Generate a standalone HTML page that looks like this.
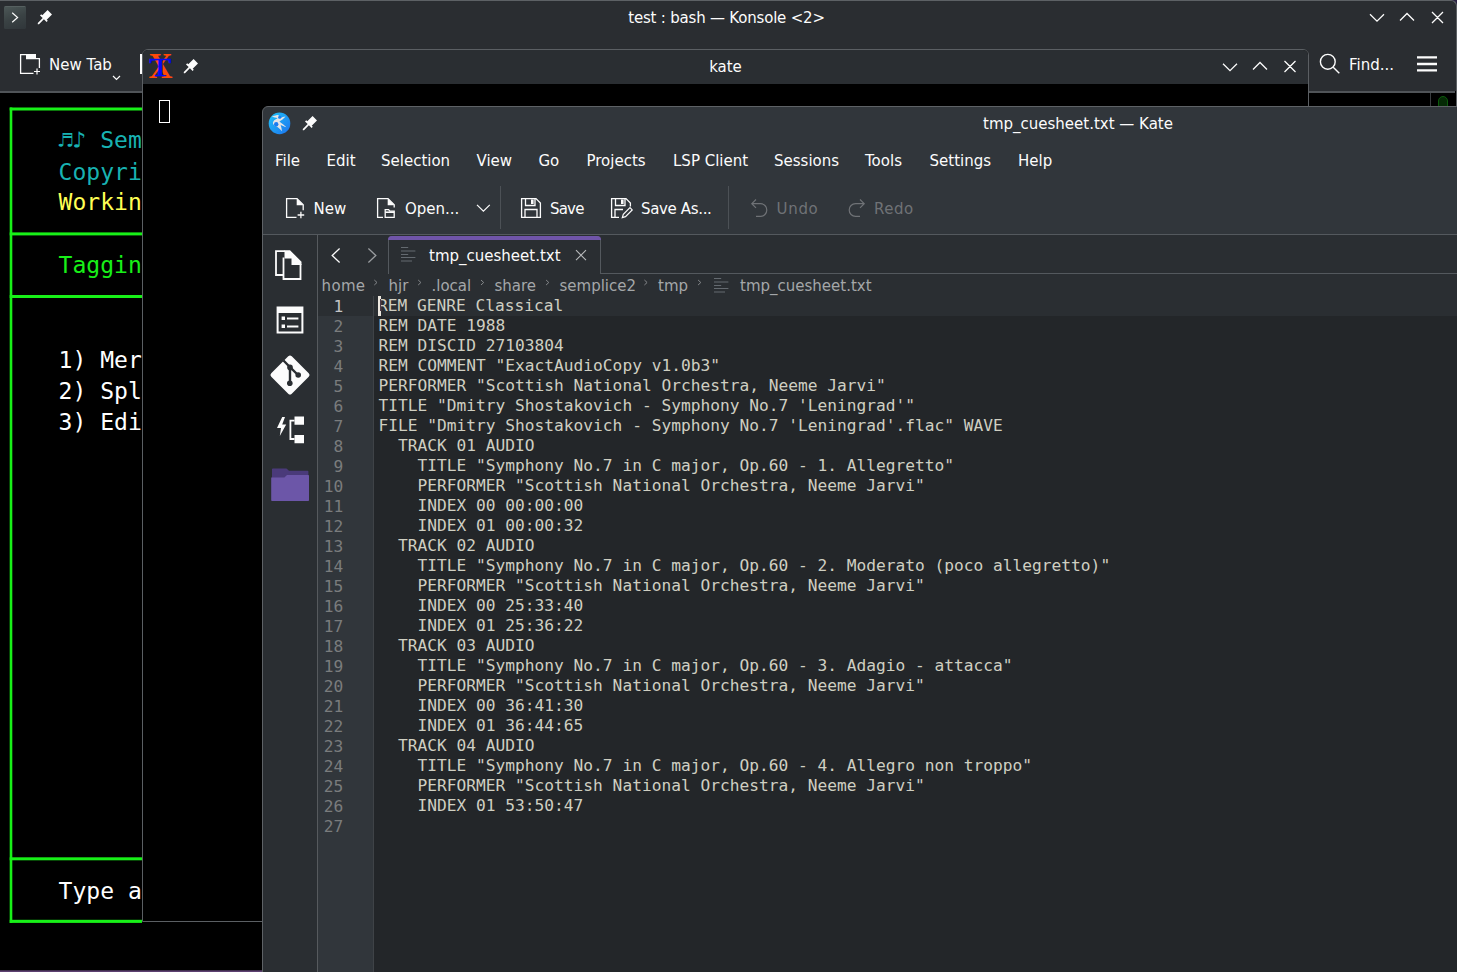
<!DOCTYPE html>
<html><head><meta charset="utf-8"><title>tmp_cuesheet.txt — Kate</title>
<style>
html,body{margin:0;padding:0;background:#000;}
body{width:1457px;height:972px;position:relative;overflow:hidden;font-family:"DejaVu Sans","Liberation Sans",sans-serif;font-size:15px;color:#fcfcfc;}
.a{position:absolute;}
.layer{position:absolute;left:0;top:0;width:0;height:0;}
.t{position:absolute;white-space:pre;line-height:20px;height:20px;margin-top:1px;}
svg{position:absolute;overflow:visible;}
.w{stroke:#fcfcfc;fill:none;}
/* Konsole */
.kbg{left:0;top:0;width:1457px;height:972px;background:#000;}
.khead{left:0;top:0;width:1457px;height:91px;background:#2a2d31;border-top:1px solid #5d6165;border-right:1px solid #5d6165;border-top-right-radius:6px;box-sizing:border-box;}
.ksep{left:0;top:91px;width:1455px;height:2px;background:#505458;}
.kstrip{left:0;top:970px;width:262px;height:2px;background:linear-gradient(180deg,#33243d,#6b4a82);}
.m1{font-family:"DejaVu Sans Mono","Liberation Mono",monospace;font-size:23.04px;line-height:31px;height:31px;white-space:pre;position:absolute;left:58.6px;}
.m1 .n{display:inline-block;width:13.87px;text-align:center;}
.g{background:#18f018;position:absolute;}
.cy{color:#18b2b2}.ye{color:#ffff54}.gr{color:#18f018}.wh{color:#fff}
/* xterm */
.xwin{left:142px;top:49px;width:1167px;height:873px;background:#000;border:1px solid #5b5f63;border-radius:6px 6px 0 0;box-sizing:border-box;}
.xtitle{left:143px;top:50px;width:1165px;height:34px;background:#2a2e32;border-radius:5px 5px 0 0;}
/* Kate */
.kwin{left:262px;top:106px;width:1300px;height:900px;background:#31363b;border:1px solid #5e6266;border-radius:6px 0 0 0;box-sizing:border-box;}
.dis{color:#6f7276;}
.bc{color:#a4a7a9;}
.vsep{width:1px;background:#4c5156;}
#ed{position:absolute;left:318px;top:296px;width:1200px;height:700px;background:#232629;}
#ed .gut{position:absolute;left:0;top:0;width:55px;height:700px;background:#31363b;}
#ed .gsep{position:absolute;left:55px;top:0;width:1px;height:700px;background:#3f4347;}
#ed .cl{position:absolute;left:56px;top:0;width:1200px;height:20px;background:#2a2e32;}
#ed .clg{position:absolute;left:0;top:0;width:55px;height:20px;background:#2a2e32;}
#ed .cur{position:absolute;left:60px;top:0;width:3px;height:20px;background:#ece8e0;z-index:3;}
#ed .cur i{position:absolute;left:1.6px;top:3px;width:1.4px;height:12px;background:#4a3a4a;}
#ed .nums{position:absolute;left:0;top:1px;width:25.3px;text-align:right;font-family:"DejaVu Sans Mono","Liberation Mono",monospace;font-size:16.22px;line-height:20px;color:#7a7c7d;}
#ed .nums div{height:20px;}
#ed .nums .c{color:#c3c4c5;}
#ed .code{position:absolute;left:60.5px;top:0;font-family:"DejaVu Sans Mono","Liberation Mono",monospace;font-size:16.22px;line-height:20px;color:#cfcfc2;white-space:pre;}
#ed .code div{height:20px;}
#ed .code div:first-child{margin-left:-0.5px;}

</style></head><body>
<div class="layer" id="konsole">
<div class="a kbg"></div>
<div class="a" style="left:1449px;top:0;width:8px;height:8px;background:#2a2142;"></div>
<div class="a khead"></div>
<div class="a" style="left:1456px;top:91px;width:1px;height:20px;background:#5d6165;"></div>
<div class="a ksep"></div>
<div class="a kstrip"></div>
<!-- title bar -->
<div class="a" style="left:3.5px;top:6px;width:22.5px;height:22.5px;border-radius:1.5px;background:linear-gradient(160deg,#4c5757,#3a4244 50%,#30363a);border-top:1px solid #566060;box-sizing:border-box;"></div>
<svg style="left:4px;top:6px" width="22" height="22" viewBox="0 0 22 22"><path class="w" stroke-width="1.2" d="M8.2 6.8 L13.6 11.5 L8.2 16.2"/></svg>
<svg style="left:37px;top:9px" width="16" height="16" viewBox="0 0 16 16"><path fill="#fcfcfc" d="M10.6 1 L15 5.4 L9.7 10.7 L10.8 11.8 L9.6 13 L6.9 10.3 L2 15.2 L0.8 15.2 L0.8 14 L5.7 9.1 L3 6.4 L4.2 5.2 L5.3 6.3 Z"/></svg>
<div class="t" style="left:0;width:1453px;text-align:center;top:7px;letter-spacing:-0.2px;">test : bash — Konsole &lt;2&gt;</div>
<svg style="left:1369px;top:9px" width="80" height="18" viewBox="0 0 80 18"><path class="w" stroke-width="1.25" d="M1 5.2 L8 12.2 L15 5.2 M31 11.5 L38 4.5 L45 11.5 M63 3 L74 14 M74 3 L63 14"/></svg>
<!-- toolbar -->
<svg style="left:19px;top:53px" width="23" height="23" viewBox="0 0 23 23"><path class="w" stroke-width="1.3" d="M14.5 20.4 H1.6 V1.6 H7.5 M20.4 5.5 V15"/><path fill="#fcfcfc" d="M7 1 H17 V5 H21 V6.2 H7 Z"/><path class="w" stroke-width="1.2" d="M15 18.5 H21 M18 15.5 V21.5"/></svg>
<div class="t" style="left:49px;top:54px;">New Tab</div>
<svg style="left:112px;top:75px" width="9" height="6" viewBox="0 0 9 6"><path class="w" stroke-width="1.2" d="M1 1 L4.5 4.5 L8 1"/></svg>
<div class="a" style="left:140px;top:54px;width:2px;height:20px;background:#fcfcfc;"></div>
<svg style="left:1318px;top:53px" width="24" height="24" viewBox="0 0 24 24"><circle class="w" stroke-width="1.4" cx="9.8" cy="8.8" r="7.4"/><path class="w" stroke-width="1.4" d="M15.2 14.2 L21.3 20.3"/></svg>
<div class="t" style="left:1349px;top:54px;">Find...</div>
<svg style="left:1417px;top:55px" width="20" height="18" viewBox="0 0 20 18"><path fill="#fcfcfc" d="M0 1.2 H20 V3.6 H0 Z M0 7.8 H20 V10.2 H0 Z M0 14.2 H20 V16.6 H0 Z"/></svg>
<!-- scrollbar -->
<div class="a" style="left:1430px;top:93px;width:1px;height:14px;background:#3a3d40;"></div>
<div class="a" style="left:1438px;top:96px;width:10px;height:20px;border:1px solid #0c5a0c;background:#052a05;border-radius:5px;box-sizing:border-box;"></div>
<!-- terminal box -->
<svg style="left:0;top:93px" width="320" height="840" viewBox="0 93 320 840"><g fill="#18f018"><rect x="9.7" y="107.5" width="2.6" height="815.5"/><rect x="9.7" y="107.5" width="132.3" height="3"/><rect x="9.7" y="232.4" width="132.3" height="3"/><rect x="9.7" y="295" width="132.3" height="3"/><rect x="9.7" y="857.3" width="132.3" height="3"/><rect x="9.7" y="919.8" width="132.3" height="3.1"/></g></svg>
<div class="m1 cy" style="top:124.6px;"><span class="n">♬</span><span class="n">♪</span> Semplice</div>
<div class="m1 cy" style="top:156.6px;">Copyright</div>
<div class="m1 ye" style="top:186.6px;">Working</div>
<div class="m1 gr" style="top:249.6px;">Tagging</div>
<div class="m1 wh" style="top:344.6px;">1) Merge</div>
<div class="m1 wh" style="top:375.6px;">2) Split</div>
<div class="m1 wh" style="top:406.6px;">3) Edit</div>
<div class="m1 wh" style="top:875.6px;">Type a</div>
</div>
<div class="layer" id="xterm">
<div class="a xwin"></div>
<div class="a xtitle"></div>
<svg style="left:147px;top:53px" width="28" height="28" viewBox="0 0 28 28"><text x="13.5" y="25" text-anchor="middle" font-family="Liberation Serif, DejaVu Serif, serif" font-weight="bold" font-size="35.3" fill="#ff4808" textLength="24" lengthAdjust="spacingAndGlyphs">X</text><text x="13.2" y="22.7" text-anchor="middle" font-family="Liberation Serif, DejaVu Serif, serif" font-size="25.6" fill="#0808f8" stroke="#0808f8" stroke-width="0.45" textLength="22" lengthAdjust="spacingAndGlyphs">T</text></svg>
<svg style="left:183px;top:58px" width="16" height="16" viewBox="0 0 16 16"><path fill="#fcfcfc" d="M10.6 1 L15 5.4 L9.7 10.7 L10.8 11.8 L9.6 13 L6.9 10.3 L2 15.2 L0.8 15.2 L0.8 14 L5.7 9.1 L3 6.4 L4.2 5.2 L5.3 6.3 Z"/></svg>
<div class="t" style="left:143px;width:1165px;text-align:center;top:56px;">kate</div>
<svg style="left:1221.5px;top:58px" width="80" height="18" viewBox="0 0 80 18"><path class="w" stroke-width="1.25" d="M1 5.7 L8 12.7 L15 5.7 M31 11.5 L38 4.5 L45 11.5 M62.5 3 L73.5 14 M73.5 3 L62.5 14"/></svg>
<div class="a" style="left:159px;top:100px;width:11px;height:23px;border:1px solid #fff;box-sizing:border-box;"></div>
</div>
<div class="layer" id="kate">
<div class="a kwin"></div>
<!-- title -->
<svg style="left:268px;top:112px" width="23" height="23" viewBox="0 0 23 23"><defs><linearGradient id="kg" x1="0" y1="0" x2="1" y2="1"><stop offset="0" stop-color="#20c4f8"/><stop offset="1" stop-color="#1c72ee"/></linearGradient></defs><circle cx="11.5" cy="11.4" r="10.8" fill="url(#kg)"/><path fill="#e4e4e6" d="M3.6 4.8 C6.5 3.6 8.8 3 10.6 3 C10.8 4.4 10.7 5.6 10.4 6.6 C13 5.6 15.4 4.6 17.6 4.4 C15.6 6.6 13.4 8.2 11.4 9.4 C13.8 11.2 16.4 13.2 18.4 15.2 C16 14.6 14.2 13.8 12.6 12.8 C13.2 15 13.8 17 14 19.2 C12.4 17.6 10.8 16 9.2 14.8 C7.8 14.4 6 13.6 5 11.8 C4.6 10.2 5.6 8.6 7.4 7.6 C8.4 7 9.2 6.6 9.6 6.2 C8 5.6 5.6 5.2 3.6 4.8 Z"/><circle cx="8.2" cy="12.2" r="2.2" fill="#1c7cf0"/><circle cx="11.8" cy="5.3" r="1.5" fill="#1c7cf0"/></svg>
<svg style="left:302px;top:115px" width="16" height="16" viewBox="0 0 16 16"><path fill="#fcfcfc" d="M10.6 1 L15 5.4 L9.7 10.7 L10.8 11.8 L9.6 13 L6.9 10.3 L2 15.2 L0.8 15.2 L0.8 14 L5.7 9.1 L3 6.4 L4.2 5.2 L5.3 6.3 Z"/></svg>
<div class="t" style="left:983px;top:113px;">tmp_cuesheet.txt — Kate</div>
<!-- menu -->
<div class="t" style="left:275px;top:150px;">File</div>
<div class="t" style="left:326.5px;top:150px;">Edit</div>
<div class="t" style="left:381px;top:150px;">Selection</div>
<div class="t" style="left:476.5px;top:150px;">View</div>
<div class="t" style="left:538.5px;top:150px;">Go</div>
<div class="t" style="left:586.5px;top:150px;">Projects</div>
<div class="t" style="left:673px;top:150px;">LSP Client</div>
<div class="t" style="left:774px;top:150px;">Sessions</div>
<div class="t" style="left:865px;top:150px;">Tools</div>
<div class="t" style="left:929.5px;top:150px;">Settings</div>
<div class="t" style="left:1018px;top:150px;">Help</div>
<!-- toolbar -->
<svg style="left:285px;top:197px" width="22" height="22" viewBox="0 0 22 22"><path class="w" stroke-width="1.3" d="M11.5 20.4 H1.6 V1.6 H12 L18.2 7.8 V13.2"/><path fill="#fcfcfc" d="M11.7 1.3 L18.6 8.2 H11.7 Z"/><path class="w" stroke-width="1.3" d="M12.6 18 H19.2 M15.9 14.7 V21.3"/></svg>
<div class="t" style="left:313.5px;top:198px;">New</div>
<svg style="left:376px;top:197px" width="22" height="22" viewBox="0 0 22 22"><path class="w" stroke-width="1.3" d="M7 20.4 H1.6 V1.6 H12 L18.2 7.8 V10.5"/><path fill="#fcfcfc" d="M11.7 1.3 L18.6 8.200 H11.7 Z"/><path class="w" stroke-width="1.3" d="M9.2 20.4 V12.7 H12.6 L13.8 14.2 H18.2 V20.4 Z"/><path fill="#fcfcfc" d="M9.2 14.4 H18.2 V16 H9.2 Z"/></svg>
<div class="t" style="left:405px;top:198px;">Open...</div>
<svg style="left:476px;top:203px" width="15" height="10" viewBox="0 0 15 10"><path class="w" stroke-width="1.2" d="M1 1.8 L7.4 8.2 L13.8 1.8"/></svg>
<div class="a vsep" style="left:500px;top:186px;height:43px;"></div>
<svg style="left:520px;top:197px" width="22" height="22" viewBox="0 0 22 22"><path class="w" stroke-width="1.3" d="M1.6 1.6 H16 L20.4 6 V20.4 H1.6 Z M5.5 1.6 V8.5 H15 V1.6 M5 20.4 V12.5 H17 V20.4"/><path fill="#fcfcfc" d="M11 2.5 H13.6 V7 H11 Z"/></svg>
<div class="t" style="left:550px;top:198px;letter-spacing:-0.8px;">Save</div>
<svg style="left:610px;top:197px" width="24" height="22" viewBox="0 0 24 22"><path class="w" stroke-width="1.3" d="M9 20.4 H1.6 V1.6 H16 L20.4 6 V9.5 M5.5 1.6 V8.5 H15 V1.6 M5 20.4 V12.5 H13"/><path fill="#fcfcfc" d="M11 2.5 H13.6 V7 H11 Z"/><path class="w" stroke-width="1.2" d="M12.3 20.6 L13.3 17.4 L20 10.7 L22.2 12.9 L15.5 19.6 Z"/></svg>
<div class="t" style="left:641px;top:198px;letter-spacing:-0.35px;">Save As...</div>
<div class="a vsep" style="left:728px;top:186px;height:43px;"></div>
<svg style="left:750px;top:198px" width="20" height="20" viewBox="0 0 20 20"><path stroke="#6f7276" fill="none" stroke-width="1.2" d="M6 1.5 L1.8 5.7 L6 9.9 M1.8 5.7 H10.5 A6.3 6.3 0 0 1 10.5 18.3 H6"/></svg>
<div class="t dis" style="left:776.5px;top:198px;letter-spacing:0.7px;">Undo</div>
<svg style="left:846px;top:198px" width="20" height="20" viewBox="0 0 20 20"><path stroke="#6f7276" fill="none" stroke-width="1.2" d="M14 1.5 L18.2 5.7 L14 9.9 M18.2 5.7 H9.5 A6.3 6.3 0 0 0 9.5 18.3 H14"/></svg>
<div class="t dis" style="left:874px;top:198px;letter-spacing:0.5px;">Redo</div>
<div class="a" style="left:263px;top:234px;width:1300px;height:1px;background:#54595e;"></div>
<!-- lower area -->
<div class="a" style="left:263px;top:235px;width:1300px;height:800px;background:#2a2e32;"></div>
<div class="a vsep" style="left:317px;top:235px;height:800px;background:#565a5e;"></div>
<!-- sidebar icons -->
<svg style="left:274px;top:249px" width="29" height="32" viewBox="0 0 29 32"><path class="w" stroke-width="1.8" d="M9.5 26 H2 V2.2 H11"/><path class="w" stroke-width="1.8" d="M9.5 8.5 V30 H26.5 V15"/><path fill="#fcfcfc" d="M10.5 1.2 H16 L27.5 12.7 V16 H17.5 V9.5 H10.5 Z"/></svg>
<svg style="left:276px;top:306px" width="28" height="28" viewBox="0 0 28 28"><path class="w" stroke-width="2" d="M1.6 1.6 H26.4 V26.4 H1.6 Z"/><path fill="#fcfcfc" d="M1 1 H27 V7 H1 Z M5.6 10.6 H9 V14 H5.6 Z M11 11.6 H22.4 V13.4 H11 Z M5.6 18.6 H9 V22 H5.6 Z M11 19.6 H22.4 V21.4 H11 Z"/></svg>
<svg style="left:268px;top:353px" width="44" height="44" viewBox="0 0 44 44"><rect x="7.5" y="7.5" width="29" height="29" rx="2.5" transform="rotate(45 22 22)" fill="#fcfcfc"/><path stroke="#2a2e32" stroke-width="2.4" fill="none" d="M15.5 7.5 L22 14.2 V30 M22 14.2 L30 22"/><circle cx="22" cy="14.4" r="2.8" fill="#2a2e32"/><circle cx="30.2" cy="22" r="2.8" fill="#2a2e32"/><circle cx="21.8" cy="30.3" r="2.8" fill="#2a2e32"/></svg>
<svg style="left:276px;top:415px" width="30" height="30" viewBox="0 0 30 30"><path fill="#fcfcfc" d="M6.2 2 L1 13 H5 L3.8 21 L10.2 9.5 H6.2 L9 2 Z M18.5 1.5 H28 V9.8 H18.5 Z M18.5 20 H28 V28.2 H18.5 Z"/><path class="w" stroke-width="1.8" d="M18.5 5.7 H14.4 V24 H18.5"/></svg>
<svg style="left:271px;top:468px" width="39" height="34" viewBox="0 0 39 34"><path fill="#4a3a7a" d="M1 1.2 Q1 0.4 1.8 0.4 H15.5 L18 2.8 H36.6 Q37.4 2.8 37.4 3.6 V12 H1 Z"/><path fill="#6c56a8" d="M0.2 9.4 H13.4 L16 7 H37.2 Q38 7 38 7.8 V32.2 Q38 33 37.2 33 H1 Q0.2 33 0.2 32.2 Z"/></svg>
<!-- tab bar -->
<svg style="left:330px;top:247px" width="12" height="17" viewBox="0 0 12 17"><path class="w" stroke-width="1.3" d="M9.6 1.6 L2.2 8.5 L9.6 15.4"/></svg>
<svg style="left:366px;top:247px" width="12" height="17" viewBox="0 0 12 17"><path stroke="#9a9da0" fill="none" stroke-width="1.3" d="M2.4 1.6 L9.8 8.5 L2.4 15.4"/></svg>
<div class="a" style="left:388px;top:236px;width:213px;height:38px;border:1px solid #54595e;border-bottom:none;border-radius:4px 4px 0 0;box-sizing:border-box;background:#2a2e32;"></div>
<div class="a" style="left:388px;top:236px;width:213px;height:4px;background:#7055a9;border-radius:4px 4px 0 0;"></div>
<div class="a" style="left:601px;top:273px;width:1000px;height:1px;background:#54595e;"></div>
<svg style="left:400px;top:246px" width="17" height="17" viewBox="0 0 17 17"><path stroke="#646a70" stroke-width="1" fill="none" d="M1 1.5 H8.2 M1 5 H15.4 M1 8.5 H8.2 M1 11.5 H15.4 M1 15 H12"/></svg>
<div class="t" style="left:429px;top:245px;">tmp_cuesheet.txt</div>
<svg style="left:575px;top:249px" width="12" height="12" viewBox="0 0 12 12"><path stroke="#b8babc" fill="none" stroke-width="1.1" d="M1 1.2 L11 11.2 M11 1.2 L1 11.2"/></svg>
<!-- breadcrumbs -->

<div class="t bc" style="left:321.6px;top:275px;letter-spacing:0.3px;">home</div>
<div class="t bc" style="left:388.5px;top:275px;">hjr</div>
<div class="t bc" style="left:431.5px;top:275px;">.local</div>
<div class="t bc" style="left:494.5px;top:275px;">share</div>
<div class="t bc" style="left:559.5px;top:275px;">semplice2</div>
<div class="t bc" style="left:658px;top:275px;">tmp</div>
<div class="t bc" style="left:740px;top:275px;">tmp_cuesheet.txt</div>
<svg style="left:373px;top:279px" width="340" height="8" viewBox="0 0 340 8"><path stroke="#85888b" fill="none" stroke-width="1" d="M1.3 1 L4.0 3.5 L1.3 6 M45.2 1 L47.9 3.5 L45.2 6 M108.0 1 L110.7 3.5 L108.0 6 M173.1 1 L175.8 3.5 L173.1 6 M271.4 1 L274.1 3.5 L271.4 6 M325.1 1 L327.8 3.5 L325.1 6"/></svg>
<svg style="left:713px;top:277px" width="17" height="17" viewBox="0 0 17 17"><path stroke="#646a70" stroke-width="1" fill="none" d="M1 1.5 H8.2 M1 5 H15.4 M1 8.5 H8.2 M1 11.5 H15.4 M1 15 H12"/></svg>
<div id="ed">
<div class="gut"></div><div class="gsep"></div><div class="cl"></div><div class="clg"></div><div class="cur"><i></i></div>
<div class="nums"><div class="c">1</div><div>2</div><div>3</div><div>4</div><div>5</div><div>6</div><div>7</div><div>8</div><div>9</div><div>10</div><div>11</div><div>12</div><div>13</div><div>14</div><div>15</div><div>16</div><div>17</div><div>18</div><div>19</div><div>20</div><div>21</div><div>22</div><div>23</div><div>24</div><div>25</div><div>26</div><div>27</div></div>
<div class="code"><div>REM GENRE Classical</div><div>REM DATE 1988</div><div>REM DISCID 27103804</div><div>REM COMMENT "ExactAudioCopy v1.0b3"</div><div>PERFORMER "Scottish National Orchestra, Neeme Jarvi"</div><div>TITLE "Dmitry Shostakovich - Symphony No.7 'Leningrad'"</div><div>FILE "Dmitry Shostakovich - Symphony No.7 'Leningrad'.flac" WAVE</div><div>  TRACK 01 AUDIO</div><div>    TITLE "Symphony No.7 in C major, Op.60 - 1. Allegretto"</div><div>    PERFORMER "Scottish National Orchestra, Neeme Jarvi"</div><div>    INDEX 00 00:00:00</div><div>    INDEX 01 00:00:32</div><div>  TRACK 02 AUDIO</div><div>    TITLE "Symphony No.7 in C major, Op.60 - 2. Moderato (poco allegretto)"</div><div>    PERFORMER "Scottish National Orchestra, Neeme Jarvi"</div><div>    INDEX 00 25:33:40</div><div>    INDEX 01 25:36:22</div><div>  TRACK 03 AUDIO</div><div>    TITLE "Symphony No.7 in C major, Op.60 - 3. Adagio - attacca"</div><div>    PERFORMER "Scottish National Orchestra, Neeme Jarvi"</div><div>    INDEX 00 36:41:30</div><div>    INDEX 01 36:44:65</div><div>  TRACK 04 AUDIO</div><div>    TITLE "Symphony No.7 in C major, Op.60 - 4. Allegro non troppo"</div><div>    PERFORMER "Scottish National Orchestra, Neeme Jarvi"</div><div>    INDEX 01 53:50:47</div><div>&nbsp;</div></div>
</div>
</div>
</body></html>
